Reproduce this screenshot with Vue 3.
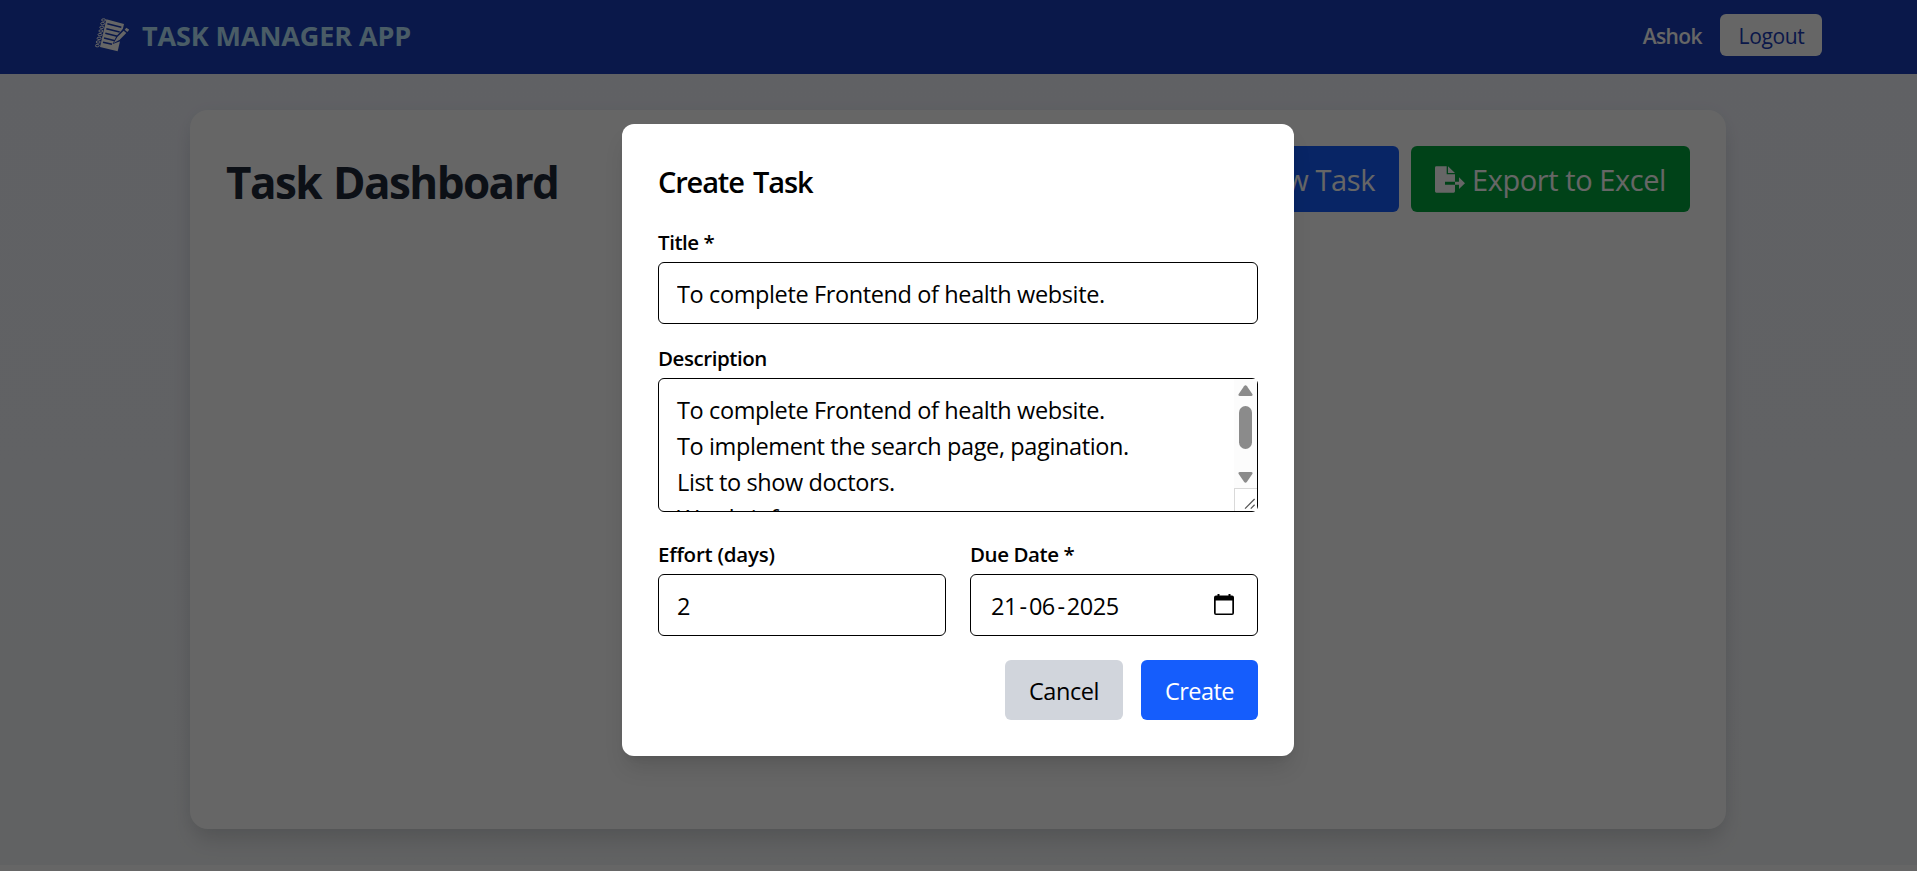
<script setup>
import { ref } from 'vue'

const title = ref('To complete Frontend of health website.')
const description = ref(
  'To complete Frontend of health website.\nTo implement the search page, pagination.\nList to show doctors.\nWards info.'
)
const effort = ref('2')
</script>

<template>
  <div class="page">
    <header class="navbar">
      <div class="brand">
        <svg class="logo" viewBox="45 54 102 102" aria-hidden="true">
          <path d="M79 58 132 72 113 154 60 141Z" fill="#fff" />
          <g fill="none" stroke="#193cb8" stroke-width="4.500">
            <path d="M82 71 124 82" />
            <path d="M79 86 119 96" />
            <path d="M76 100 112 109" />
            <path d="M72 114 105 122" />
            <path d="M69 127 96 133" />
          </g>
          <g fill="none" stroke="#fff" stroke-width="3">
            <ellipse v-for="n in 8" :key="n" :cx="73.5 - n * 2.7" :cy="49 + n * 11" rx="6" ry="3.6" />
          </g>
          <path d="M98 132 109 109 137 78 151 91 121 124Z" fill="#193cb8" />
          <path d="M101 129 112 111 131 92 139 99 119 119Z" fill="#fff" />
          <path d="M134 89 139 83 148 89 142 96Z" fill="#fff" />
        </svg>
        <span class="brand-name">TASK MANAGER APP</span>
      </div>
      <div class="account">
        <span class="user">Ashok</span>
        <button class="logout">Logout</button>
      </div>
    </header>

    <main class="content">
      <section class="dashboard">
        <div class="dashboard-head">
          <h1>Task Dashboard</h1>
          <div class="actions">
            <button class="action new"><span>+ New Task</span></button>
            <button class="action export">
              <svg viewBox="45 32 90 79" aria-hidden="true">
                <path
                  fill="#fff"
                  d="M49 32H80V56H105V78H75V87H105V107Q105 111 101 111H49Q45 111 45 107V36Q45 32 49 32ZM84 32 105 52H84ZM105 78H117V65L135 82.500 117 100V87H105Z"
                />
              </svg>
              <span>Export to Excel</span>
            </button>
          </div>
        </div>
      </section>
    </main>

    <div class="overlay">
      <form class="modal" @submit.prevent>
        <h2>Create Task</h2>
        <div class="field">
          <label>Title *</label>
          <input v-model="title" class="control" type="text" />
        </div>
        <div class="field">
          <label>Description</label>
          <div class="area">
            <textarea v-model="description" class="control" rows="3"></textarea>
            <div class="scrollbar">
              <svg class="arrow" viewBox="0 0 15 12"><path d="M6 1.200Q7.500-.8 9 1.200L14.300 9Q15.200 11 13 11H2Q-.2 11 .7 9Z" /></svg>
              <div class="thumb"></div>
              <svg class="arrow down" viewBox="0 0 15 12"><path d="M6 10.800Q7.500 12.800 9 10.800L14.300 3Q15.200 1 13 1H2Q-.2 1 .7 3Z" /></svg>
              <div class="grip">
                <svg viewBox="0 0 23 23"><path d="M10.500 20.500 20.500 10.500M16.500 20.500 20.500 16.500" /></svg>
              </div>
            </div>
          </div>
        </div>
        <div class="row">
          <div class="field">
            <label class="l-effort">Effort (days)</label>
            <input v-model="effort" class="control" type="text" />
          </div>
          <div class="field">
            <label>Due Date *</label>
            <div class="control date">
              <span class="date-value">21<i>-</i>06<i>-</i>2025</span>
              <svg viewBox="0 0 20 21" aria-hidden="true">
                <path d="M2 1.500H3.500V0H5.500V1.500H14.500V0H16.500V1.500H18Q20 1.500 20 3.500V19Q20 21 18 21H2Q0 21 0 19V3.500Q0 1.500 2 1.500ZM1.700 6.500V19.400H18.300V6.500Z" fill-rule="evenodd" />
              </svg>
            </div>
          </div>
        </div>
        <div class="buttons">
          <button class="btn cancel" type="button"><span>Cancel</span></button>
          <button class="btn create" type="submit"><span>Create</span></button>
        </div>
      </form>
    </div>
  </div>
</template>

<style>
body {
  margin: 0;
  background: #fff;
  overflow: hidden;
}
</style>

<style scoped>
* {
  box-sizing: border-box;
}
.page {
  position: relative;
  height: 871px;
  overflow: hidden;
  font-family: "Segoe UI", "Open Sans", "Noto Sans", sans-serif;
  color: #000;
}
button,
input,
textarea {
  font: inherit;
  color: inherit;
  border: 0;
}
button {
  padding: 0;
}
.navbar {
  height: 74px;
  padding: 0 95px 4px;
  display: flex;
  align-items: center;
  justify-content: space-between;
  background: #193cb8;
}
.brand {
  display: flex;
  align-items: center;
  gap: 13px;
}
.logo {
  width: 34px;
  height: 34px;
}
.brand-name {
  padding-top: 2px;
  font-size: 27px;
  line-height: 40px;
  font-weight: 700;
  letter-spacing: -0.1px;
  color: #b8e6fe;
}
.account {
  display: flex;
  align-items: center;
  gap: 18px;
  font-size: 21px;
  line-height: 30px;
}
.user {
  padding-top: 2px;
  font-weight: 600;
  letter-spacing: -0.6px;
  color: #fff;
}
.logout {
  width: 102px;
  height: 42px;
  padding: 2px 0 0 1px;
  border-radius: 6px;
  background: #fff;
  color: #193cb8;
  letter-spacing: -0.35px;
}
.content {
  height: 791px;
  padding: 36px 1px 36px 0;
  background: linear-gradient(to bottom, #f1f3fb, #f3f5f7);
}
.dashboard {
  width: 1536px;
  height: 719px;
  margin: 0 auto;
  padding: 36px;
  border-radius: 18px;
  background: #fff;
  box-shadow: 0 15px 22.500px -4.500px rgba(0, 0, 0, 0.13), 0 0 18px rgba(0, 60, 90, 0.05);
}
.dashboard-head {
  display: flex;
  align-items: center;
  justify-content: space-between;
}
h1 {
  margin: 5px 0 0;
  font-size: 44px;
  line-height: 54px;
  font-weight: 700;
  letter-spacing: -1.550px;
  word-spacing: 2px;
  color: #1e2939;
}
.actions {
  display: flex;
  gap: 12px;
}
.action {
  height: 66px;
  padding: 0 24px;
  display: flex;
  align-items: center;
  gap: 7px;
  border-radius: 6px;
  font-size: 29px;
  letter-spacing: -0.420px;
  color: #fff;
}
.action svg {
  width: 30px;
  height: 27px;
}
.action span {
  padding-top: 1px;
}
.new {
  background: #155dfc;
}
.export {
  width: 279px;
  background: #00a63e;
  white-space: nowrap;
}
.overlay {
  position: absolute;
  inset: 0;
  padding: 124px 1px 0 0;
  background: rgba(0, 0, 0, 0.6);
}
.modal {
  width: 672px;
  height: 632px;
  margin: 0 auto;
  padding: 36px;
  border-radius: 12px;
  background: #fff;
  box-shadow: 0 15px 22.500px -4.500px rgba(0, 0, 0, 0.12), 0 6px 9px -6px rgba(0, 0, 0, 0.1);
}
h2 {
  margin: 0 0 24px;
  padding-top: 2px;
  font-size: 29px;
  line-height: 40px;
  font-weight: 600;
  letter-spacing: -1.150px;
  word-spacing: 3px;
}
.field {
  display: flex;
  flex-direction: column;
  gap: 6px;
  margin-bottom: 18px;
}
label {
  padding-top: 2px;
  font-size: 20.500px;
  line-height: 28px;
  font-weight: 600;
  letter-spacing: -0.440px;
}
.l-effort {
  letter-spacing: -0.220px;
}
.control {
  display: block;
  width: 100%;
  height: 62px;
  margin: 0;
  padding: 13px 18px 11px;
  border: 1px solid #000;
  border-radius: 6px;
  outline: 0;
  background: #fff;
  font-size: 23.500px;
  line-height: 36px;
  letter-spacing: -0.380px;
}
.area {
  position: relative;
  margin-bottom: 8px;
}
textarea.control {
  height: 134px;
  resize: none;
  overflow: hidden;
}
.scrollbar {
  position: absolute;
  top: 1px;
  right: 1px;
  bottom: 1px;
  width: 23px;
  display: flex;
  flex-direction: column;
  align-items: center;
  background: #fcfcfc;
}
.arrow {
  width: 15px;
  height: 12px;
  margin-top: 6px;
  fill: #8b8b8b;
}
.arrow.down {
  margin-top: 22px;
}
.thumb {
  width: 13px;
  height: 43px;
  margin-top: 9px;
  border-radius: 7px;
  background: #8b8b8b;
}
.grip {
  width: 23px;
  height: 23px;
  margin-top: auto;
  border-top: 1px solid #d9d9d9;
  border-left: 1px solid #d9d9d9;
  background: #fff;
}
.grip svg {
  display: block;
  width: 22px;
  height: 22px;
  fill: none;
  stroke: #555;
  stroke-width: 1.300;
}
.row {
  display: grid;
  grid-template-columns: 1fr 1fr;
  gap: 24px;
}
.row .field {
  margin-bottom: 24px;
}
.date {
  display: flex;
  align-items: center;
  justify-content: space-between;
  padding: 12px 23px 12px 20px;
}
.date-value {
  padding-top: 2px;
  letter-spacing: -0.500px;
}
.date-value i {
  font-style: normal;
  padding: 0 2.300px 0 2.700px;
}
.date svg {
  width: 20px;
  height: 21px;
  margin-bottom: 2px;
}
.buttons {
  display: flex;
  justify-content: flex-end;
  gap: 18px;
}
.btn {
  height: 60px;
  padding-top: 2px;
  border-radius: 6px;
  font-size: 23.500px;
  line-height: 36px;
}
.cancel {
  width: 118px;
  background: #d1d5dc;
  letter-spacing: -0.450px;
}
.create {
  width: 117px;
  background: #155dfc;
  color: #fff;
  font-weight: 500;
  letter-spacing: -0.550px;
}
</style>
